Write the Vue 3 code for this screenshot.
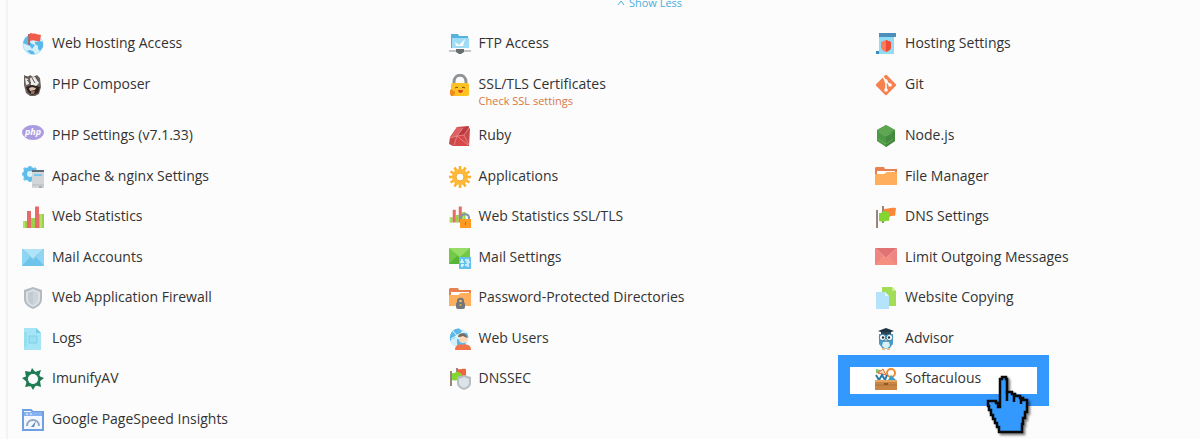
<script setup>
import { ref } from 'vue'

const expanded = ref(true)

const globe = `
  <circle cx="10" cy="10" r="9.5" fill="#d3f0fb"/>
  <path d="M1 8C2 3 6 0 10 .5L13 3 11 6 7 7 6 10 3 11 1 13zM8 11l5 1 4 3-3 4-5 .5-1-4zM14 5l4 0 1.5 4-3 2-3-2z" fill="#5bb8e8"/>`

const bars = `
  <path d="M1 15h4v7H1zM9 12h4v10H9zM17 8h5v14h-5z" fill="#9bd04a"/>
  <path d="M5 5h4v17H5zM13 .5h4V22h-4z" fill="#e66a6a"/>
  <path d="M1 15h2v7H1zM18 8h2v14h-2z" fill="#b4e06c"/>`

const folder = `
  <path d="M0 2l1-1h8l1 2h12v6H0z" fill="#e8804f"/>
  <path d="M2 5h18v6H2z" fill="#fff"/>
  <path d="M0 8h9l3-2h10v13H0z" fill="#ffae5c"/>`

const flags = `
  <path d="M7 0h2v17H7z" fill="#9a857a"/>
  <path d="M9 3c4 0 6-2 12-1l-1 8c-4-1-6 2-11 1z" fill="#fb873b"/>
  <path d="M1 4h2v18H1z" fill="#9a857a"/>
  <path d="M4 7c3 1 4-3 7-2 1 1 2 2 4 1l-1 9c-4-1-5 2-10 0z" fill="#83d531"/>`

const icons = {
  hosting: `
    <circle cx="11" cy="11.5" r="10" fill="#d3f0fb" stroke="#b4e2f5"/>
    <path d="M3 5l4-3 0 6 3 3 3 1-3 4-2-3-5-2-2-1zM13 9l5-1 3 1v5l-3 4-2-2 0-3-3-2zM7 17l4 1 2 3-4 0-4-3z" fill="#5bb8e8"/>
    <path d="M6 1h2v11H6z" fill="#a3716c"/>
    <path d="M8 0c4 1 5 0 6 1l5 1-1 6c-5 1-5-2-10 0z" fill="#f25a4c"/>`,
  ftp: `
    <path d="M2 1h7l1 2h9v12H2z" fill="#55b3de"/>
    <path d="M3 5h17v10H3z" fill="#9fddf6"/>
    <path d="M6 9l4 3 6-6-2 7H7z" fill="#fff"/>
    <path d="M0 17h22v2H0z" fill="#c3c7ca"/>
    <path d="M7 16h8v3l-3 2h-2l-3-2z" fill="#686d70"/>`,
  scroll: `
    <path d="M4 2h15v19H1v-3h3z" fill="#8fdcf3"/>
    <path d="M4 0h17v4H4z" fill="#4c8fbb"/>
    <path d="M1 18h3v3H1z" fill="#368dbb"/>
    <path d="M6 9l5-2 5 2v5c0 3-3 4-5 5-3-1-5-3-5-5z" fill="#ff7a5c"/>
    <path d="M11 7l5 2v5c0 3-3 4-5 5z" fill="#ec4c34"/>`,
  composer: `
    <path d="M2 1l4 2 2-2 3 2 4-2 3 3 1 9-2 7-4 2H8l-4-3-2-8z" fill="#6b625e"/>
    <path d="M3 4l3 1 1 5-3 1zM8 4l5-1 4 6-3 3-5-1z" fill="#ececec"/>
    <path d="M4 13l6-2 8 2-2 6-6 2-4-3z" fill="#2c211d"/>
    <path d="M7 14l3-1 4 1-1 2-5 1z" fill="#dcbfae"/>
    <path d="M9 17h4l-1 3-3 0z" fill="#94705e"/>
    <path d="M5 6l4 3M10 4l3 5M14 2l2 5M3 3l5 0" stroke="#5a504c" fill="none"/>`,
  ssl: `
    <path d="M5 11V8c0-9 12-9 12 0v3" fill="none" stroke="#8e9397" stroke-width="3"/>
    <rect x="2" y="9" width="18" height="13" rx="2" fill="#ffc221"/>
    <path d="M6 14l2-1 1 1M13 14l1-1 2 1" fill="none" stroke="#765017"/>
    <path d="M9 16h5c0 4-5 4-5 0z" fill="#d94726"/>
    <path d="M1 16l2-1 1 2 2 0v3l-2 2H2l-1-2z" fill="#f28b20"/>`,
  git: `
    <rect x="3.5" y="3.5" width="15" height="15" rx="1" transform="rotate(45 11 11)" fill="#f5814f"/>
    <path d="M8 3l3 4v9M11 7l4 4" fill="none" stroke="#fff" stroke-width="1.5"/>
    <circle cx="11" cy="7" r="1.7" fill="#fff"/>
    <circle cx="11" cy="16" r="1.8" fill="#fff"/>
    <circle cx="15" cy="11" r="1.8" fill="#fff"/>`,
  php: `
    <ellipse cx="11" cy="7.5" rx="11" ry="7.5" fill="#ab9be0"/>
    <text x="11" y="10" text-anchor="middle" font-family="Open Sans, sans-serif" font-size="9" font-weight="700" font-style="italic" fill="#fff">php</text>`,
  ruby: `
    <path d="M8 2l11-1 2 3-1 17H4l-4-2 1-7z" fill="#c9484a"/>
    <path d="M8 2l6 1-6 8-7 2z" fill="#dd6263"/>
    <path d="M14 3l6-2-5 9-7 1z" fill="#bd3940"/>
    <path d="M8 11l7-1 5 11H5z" fill="#d5494c"/>
    <path d="M1 13l7-2 6-8M8 11L5 20M8 11l7-1 5-7M15 10l5 10M8 11l11 9" fill="none" stroke="#ef9995" stroke-width=".7"/>`,
  node: `
    <path d="M11 0l9 5v11l-9 6-9-6V5z" fill="#4d9a46"/>
    <path d="M11 0l9 5-9 6-9-6z" fill="#5fa653"/>
    <path d="M11 11l9-6v11l-9 6z" fill="#43893f"/>
    <path d="M4 7l7 4 6-3M3 14l8 5 7-5" stroke="#71b463" stroke-width=".7" fill="none"/>`,
  server: `
    <path d="M8 0v16M0 8h16M2 2l12 12M14 2L2 14" stroke="#6ec4ec" stroke-width="3"/>
    <circle cx="8" cy="8" r="5" fill="#d8f3fc" stroke="#5ebce9" stroke-width="4"/>
    <path d="M10 4h12v18H10z" fill="#d3d6d9"/>
    <path d="M10 4h12v2H10z" fill="#5d6d79"/>
    <path d="M12 9h8" stroke="#77c8f0" stroke-width="2"/>
    <path d="M10 19h12" stroke="#b5bbc0"/>
    <path d="M17 21h3" stroke="#7d868c"/>`,
  gear: `
    <path d="M11 0v22M0 11h22M5.5 1.5l11 19M16.5 1.5l-11 19M1.5 5.5l19 11M1.5 16.5l19-11" stroke="#fbb02c" stroke-width="2.5"/>
    <circle cx="11" cy="11" r="6" fill="#fff" stroke="#ffb938" stroke-width="4"/>
    <circle cx="11" cy="11" r="4" fill="#fff" stroke="#f3a52c"/>`,
  folder,
  bars,
  barsLock: `
    <g transform="scale(.75)">${bars}</g>
    <path d="M12 15v-3c0-5 8-5 8 0v3" fill="none" stroke="#7c95a6" stroke-width="2"/>
    <path d="M11 13h11v9H11z" fill="#ff9a22"/>
    <path d="M16 16h1v3h-1z" fill="#c86a17"/>`,
  flags,
  mail: `
    <path d="M0 2h22v17H0z" fill="#8fd5f4"/>
    <path d="M0 2h22L11 12z" fill="#aee3f8"/>
    <path d="M0 19l8-9 3 3 3-3 8 9z" fill="#6cc3ec"/>
    <path d="M0 2l11 10L22 2" fill="none" stroke="#7fc3df" stroke-width=".7"/>`,
  mailGear: `
    <path d="M0 1h21v16H0z" fill="#72c944"/>
    <path d="M0 1h21l-10 9z" fill="#98dc68"/>
    <path d="M0 17l8-8 3 2 2-2 8 8z" fill="#54b53a"/>
    <path d="M10 10h12v12H10z" fill="#63c1eb"/>
    <path d="M13 12v3M13 17v3M19 12v2M19 16v4M11 15h4M16 13h2M16 18h2M12 18h3M17 15h4" stroke="#e4f8ff" stroke-width="1.5"/>`,
  mailRed: `
    <path d="M0 1h22v17H0z" fill="#ef8580"/>
    <path d="M0 1h22L11 11z" fill="#e27374"/>
    <path d="M0 18l8-9 3 3 3-3 8 9z" fill="#f4907f"/>
    <path d="M0 1l11 10L22 1" fill="none" stroke="#f8aba4" stroke-width=".7"/>`,
  shield: `
    <path d="M11 0l9 3v9c0 5-4 8-9 10-5-2-9-5-9-10V3z" fill="#b3bac1"/>
    <path d="M11 2l7 3v7c0 4-3 6-7 8-4-2-7-4-7-8V5z" fill="#dce1e5"/>
    <path d="M11 4v14c-3-1-5-3-5-6V6z" fill="#c3cad1"/>
    <path d="M11 4v14c3-1 5-3 5-6V6z" fill="#ced5da"/>`,
  folderLock: `${folder}
    <path d="M9 16v-2c0-3 5-3 5 0v2" fill="none" stroke="#6c757b" stroke-width="2"/>
    <rect x="7" y="15" width="9" height="7" rx="2" fill="#6f787d"/>
    <circle cx="11.5" cy="18" r="1" fill="#e8aa6b"/>`,
  copy: `
    <path d="M7 0h10l4 4v15H7z" fill="#a3dc58"/>
    <path d="M17 0v4h4z" fill="#c6f088"/>
    <path d="M1 5h9l4 4v13H1z" fill="#b4e3fb"/>
    <path d="M10 5v4h4z" fill="#e1f8ff"/>`,
  logs: `
    <path d="M2 0h12l5 5v17H2z" fill="#a5e5f5"/>
    <path d="M14 0v5h5z" fill="#74cde4"/>
    <path d="M7 8h8v7H7z" fill="#9be0f1" stroke="#7dd3e8"/>
    <path d="M2 4h3v15H2z" fill="#93dff1"/>`,
  users: `${globe}
    <path d="M4 3l8 10M2 11l12-7" stroke="#e9faff" fill="none"/>
    <circle cx="14" cy="11" r="4" fill="#ffd9b8"/>
    <path d="M9 9c0-5 9-5 9 1l-4-2-3 1z" fill="#7a6a5d"/>
    <path d="M6 22c0-4 2-5 6-6l2 1 2-1c4 1 6 2 6 6z" fill="#f2744a"/>`,
  owl: `
    <path d="M4 6h14v10l-4 5H8l-4-5z" fill="#4b9bc5"/>
    <path d="M3 3l8-3 8 3-8 3z" fill="#203443"/>
    <path d="M6 4h10v3H6z" fill="#2c4557"/>
    <circle cx="7.5" cy="9.5" r="3.2" fill="#fff" stroke="#297ca9"/>
    <circle cx="14.5" cy="9.5" r="3.2" fill="#fff" stroke="#297ca9"/>
    <circle cx="8" cy="9.5" r="1.2" fill="#203443"/>
    <circle cx="14" cy="9.5" r="1.2" fill="#203443"/>
    <path d="M8 14h6l1 4-4 3-4-3z" fill="#d9f0f7"/>
    <path d="M10 11h2l-1 3zM7 20h3v2H7zM12 20h3v2h-3z" fill="#e5c08c"/>`,
  imunify: `
    <circle cx="11" cy="11" r="6" fill="none" stroke="#23835a" stroke-width="3"/>
    <path d="M8 5l2-5 4 5zM13 4l6-2-2 6zM17 8l5 2-5 4zM18 13l1 6-6-2zM14 17l-3 5-3-5zM9 18l-6 1 2-6zM5 14l-5-4 5-2zM4 9L3 3l6 1z" fill="#1f7a54"/>
    <circle cx="11" cy="11" r="5" fill="#fcfcfc"/>`,
  flagsShield: `
    <path d="M7 0h2v10H7zM1 3h2v15H1z" fill="#9a857a"/>
    <path d="M9 1c3 1 4-1 8 0v7H9z" fill="#f0653b"/>
    <path d="M3 5c3 1 4-2 6-1l4 2-2 6c-3 0-5 1-8 0z" fill="#83d531"/>
    <path d="M15 7l7 2v6c0 4-4 6-7 7-3-1-7-3-7-7V9z" fill="#b6bec5"/>
    <path d="M15 9l5 2v4c0 3-3 4-5 5-2-1-5-2-5-5v-4z" fill="#dce2e7"/>`,
  softaculous: `
    <path d="M1 1l5 1-1 4-4-1z" fill="#8cc26a"/>
    <path d="M3 5l5-4 3 6z" fill="#f6d9b8" stroke="#e5653c"/>
    <circle cx="16" cy="5" r="4" fill="#fff" stroke="#f28b2f" stroke-width="2"/>
    <path d="M1 7l3 5 3-5 3 5 2-5" fill="none" stroke="#2779a8" stroke-width="2"/>
    <path d="M13 12l3-5 5 5z" fill="#3f9ec3"/>
    <path d="M0 13h22v9H0z" fill="#c98543"/>
    <path d="M0 12h22v2H0z" fill="#e3a561"/>
    <path d="M0 17h22" stroke="#b0713a"/>
    <path d="M9 15h4v2H9z" fill="#8d5730"/>`,
  pagespeed: `
    <path d="M1 3V1h8l2 2h10v18H1z" fill="#f3f8ff" stroke="#6f9fe2" stroke-width="2"/>
    <path d="M2 3h18v4H2z" fill="#86b2f1"/>
    <path d="M4 5h2M8 5h2" stroke="#fff"/>
    <path d="M5 17c0-8 12-8 12 0" fill="none" stroke="#8fa5c2" stroke-width="2"/>
    <path d="M9 18l5-6-2 6z" fill="#6485b2"/>`
}

const tools = [
  { name: 'Web Hosting Access', icon: 'hosting' },
  { name: 'FTP Access', icon: 'ftp' },
  { name: 'Hosting Settings', icon: 'scroll' },
  { name: 'PHP Composer', icon: 'composer' },
  { name: 'SSL/TLS Certificates', icon: 'ssl', note: 'Check SSL settings' },
  { name: 'Git', icon: 'git' },
  { name: 'PHP Settings (v7.1.33)', icon: 'php' },
  { name: 'Ruby', icon: 'ruby' },
  { name: 'Node.js', icon: 'node' },
  { name: 'Apache & nginx Settings', icon: 'server' },
  { name: 'Applications', icon: 'gear' },
  { name: 'File Manager', icon: 'folder' },
  { name: 'Web Statistics', icon: 'bars' },
  { name: 'Web Statistics SSL/TLS', icon: 'barsLock' },
  { name: 'DNS Settings', icon: 'flags' },
  { name: 'Mail Accounts', icon: 'mail' },
  { name: 'Mail Settings', icon: 'mailGear' },
  { name: 'Limit Outgoing Messages', icon: 'mailRed' },
  { name: 'Web Application Firewall', icon: 'shield' },
  { name: 'Password-Protected Directories', icon: 'folderLock' },
  { name: 'Website Copying', icon: 'copy' },
  { name: 'Logs', icon: 'logs' },
  { name: 'Web Users', icon: 'users' },
  { name: 'Advisor', icon: 'owl' },
  { name: 'ImunifyAV', icon: 'imunify' },
  { name: 'DNSSEC', icon: 'flagsShield' },
  { name: 'Softaculous', icon: 'softaculous', marked: true },
  { name: 'Google PageSpeed Insights', icon: 'pagespeed' }
]
</script>

<template>

  <main class="panel">

    <button class="toggle" type="button" @click="expanded = !expanded">
      <svg class="chevron" viewBox="0 0 8 8" aria-hidden="true">
        <path d="M1 6l3-4 3 4" fill="none" stroke="currentColor" />
      </svg>
      {{ expanded ? 'Show Less' : 'Show More' }}
    </button>

    <ul v-if="expanded" class="tools">
      <li v-for="tool in tools" :key="tool.name" class="tool">
        <div v-if="tool.marked" class="marker"></div>
        <svg class="icon" viewBox="0 0 22 22" aria-hidden="true" v-html="icons[tool.icon]"></svg>
        <div class="text">
          <a href="#" class="name">{{ tool.name }}</a>
          <a v-if="tool.note" href="#" class="note">{{ tool.note }}</a>
        </div>
        <svg v-if="tool.marked" class="hand" viewBox="0 0 60 70" aria-hidden="true">
          <path
            d="M20 38V11h2V9h4v2h1v13h5v2h3v2h5v2h3v2h4v12h-2v6h-2v6h-1v8H19v-5h-2v-4h-2v-4h-2v-4h-2v-5H9v-4H8v-5h8v2h2v4h2z"
            fill="#3399ff"
            stroke="#0a0a0a"
            stroke-width="2.5"
          />
          <path d="M27 23v10M34 27v7M41 29v7" stroke="#0a0a0a" stroke-width="2.5" />
        </svg>
      </li>
    </ul>

  </main>

</template>

<style>
body {
  margin: 0;
  background: #fcfcfc;
}
</style>

<style scoped>

.panel {
  display: flex;
  flex-direction: column;
  margin-left: 6px;
  padding: 0 5px 0 14px;
  border-left: 2px solid #f3f3f3;
  overflow: hidden;
  font-family: "Open Sans", sans-serif;
  color: #333;
}

.toggle {
  display: flex;
  align-items: center;
  align-self: center;
  gap: 4px;
  margin: -5px 0 0 82px;
  padding: 0;
  border: 0;
  background: none;
  font-family: inherit;
  font-size: 11px;
  line-height: 16px;
  color: #4baedb;
  cursor: pointer;
}

.chevron {
  width: 8px;
  height: 8px;
}

.tools {
  display: grid;
  grid-template-columns: 4fr 4fr 3fr;
  grid-auto-rows: minmax(41px, auto) minmax(40px, auto);
  margin: 0;
  padding: 22px 0 0;
  list-style: none;
}

.tool {
  position: relative;
  display: flex;
  align-items: flex-start;
  gap: 8px;
}

.icon {
  position: relative;
  flex: none;
  width: 22px;
  height: 22px;
}

.text {
  position: relative;
  display: flex;
  flex-direction: column;
}

.name {
  font-size: 14px;
  line-height: 20px;
  color: inherit;
  text-decoration: none;
  white-space: nowrap;
}

.note {
  padding-bottom: 17px;
  font-size: 11px;
  line-height: 14px;
  color: #d9773f;
  text-decoration: none;
}

.name:hover,
.note:hover {
  text-decoration: underline;
}

.marker {
  position: absolute;
  top: -13px;
  left: -37px;
  box-sizing: border-box;
  width: 211px;
  height: 51px;
  border: 12px solid #3399ff;
  background: #fff;
}

.hand {
  position: absolute;
  top: 0;
  left: 105px;
  width: 60px;
  height: 70px;
  filter: drop-shadow(2px 2px 1px rgba(0, 0, 0, 0.5));
}

</style>
